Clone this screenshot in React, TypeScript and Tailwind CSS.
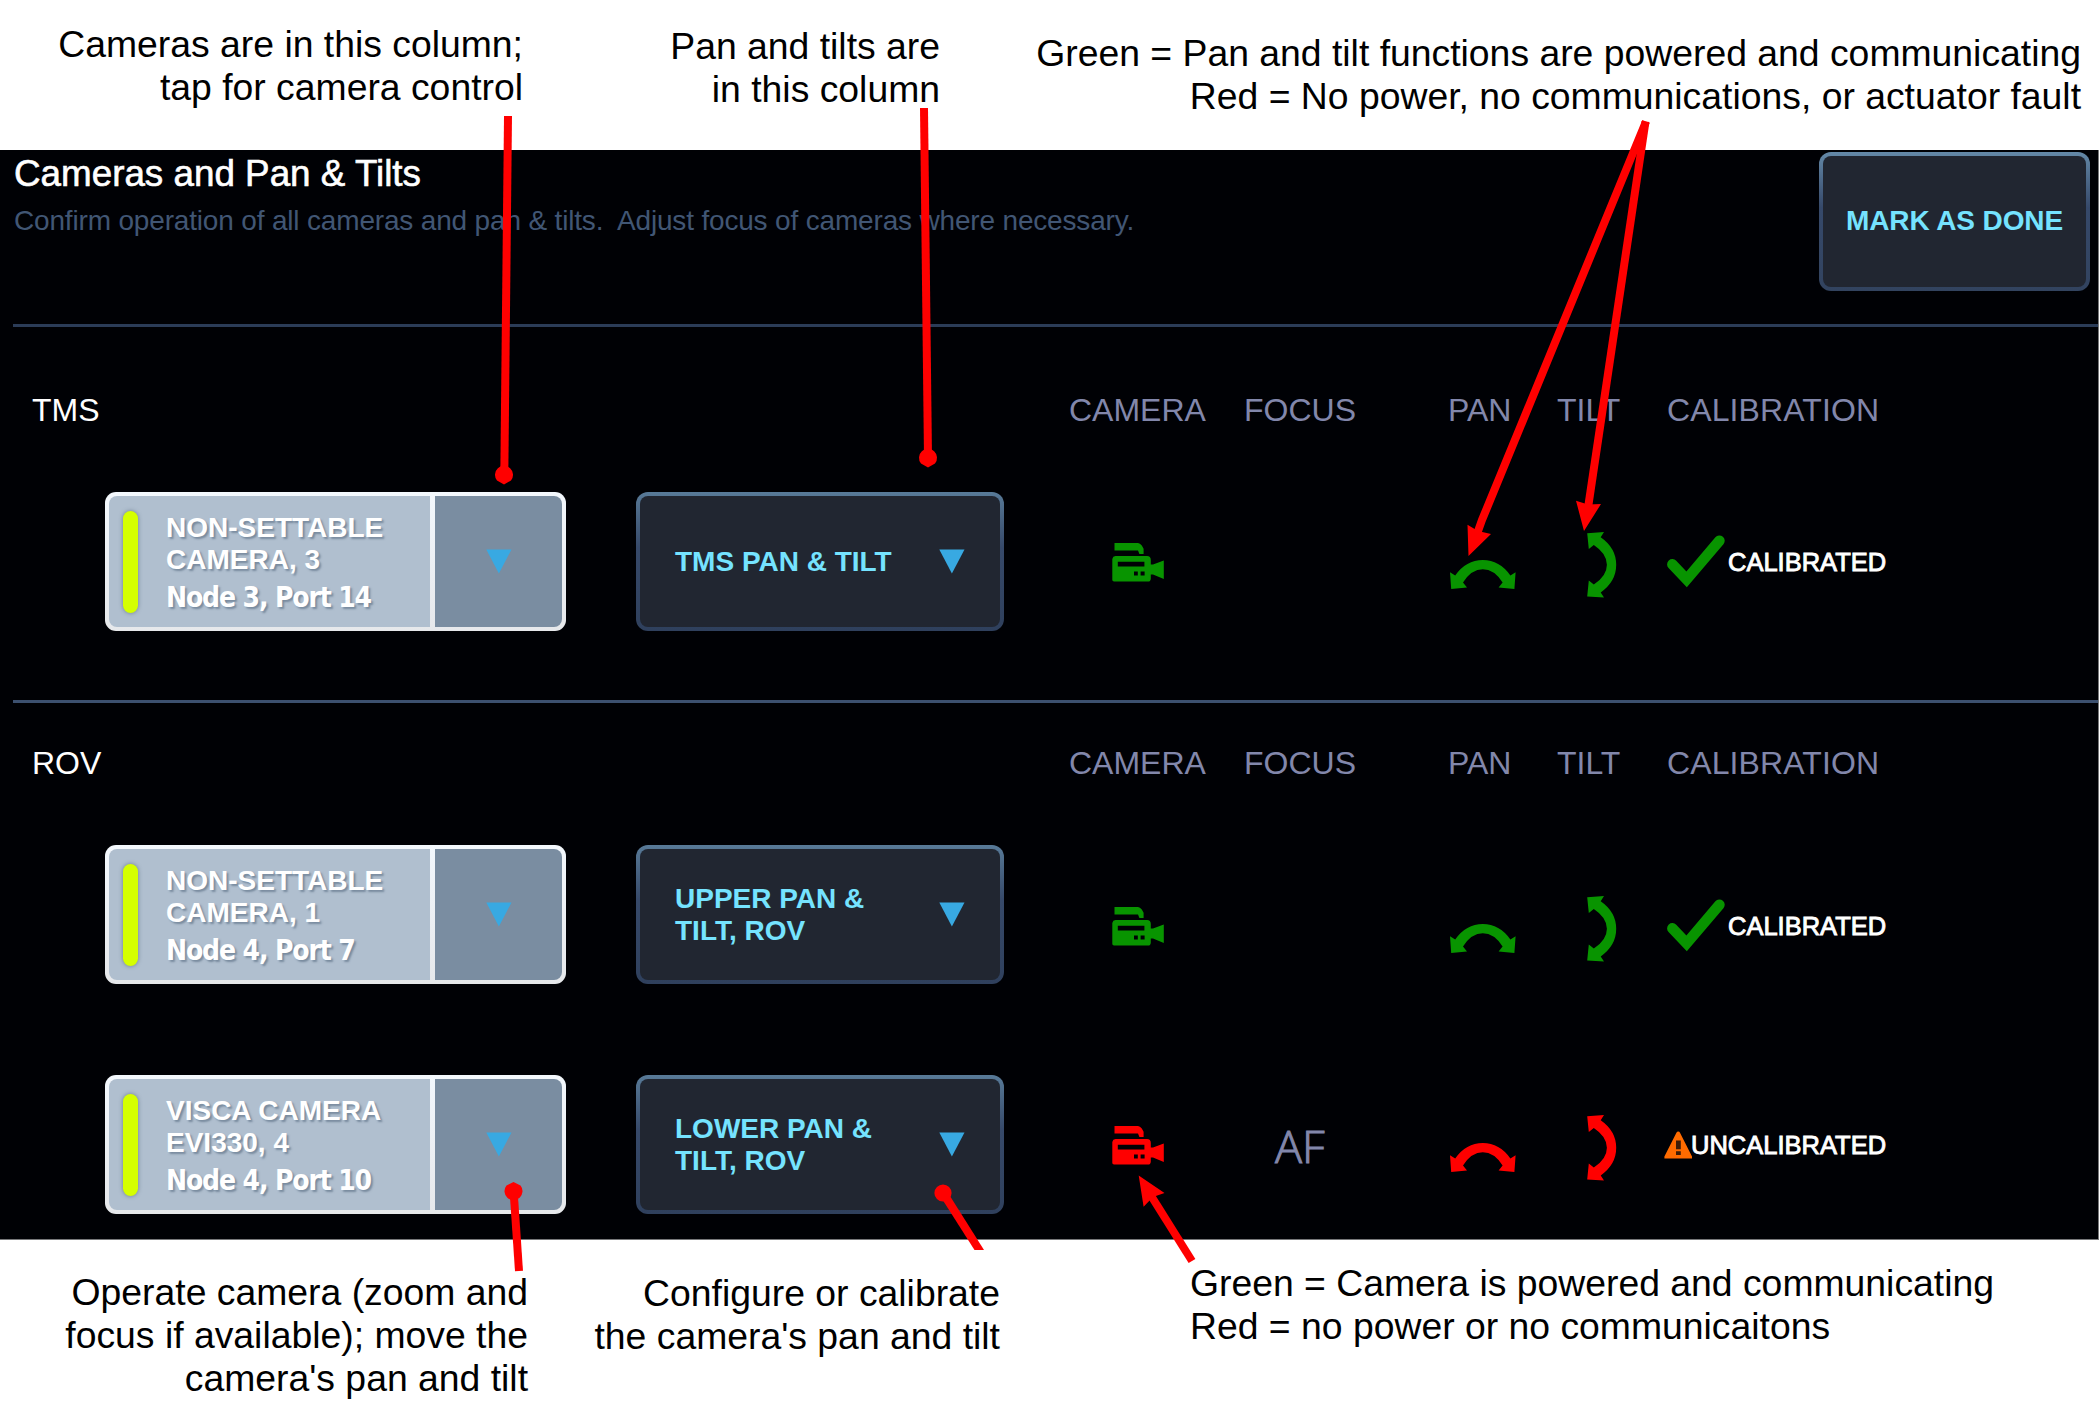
import React from "react";

type Status = "ok" | "fault";

interface Device {
  camera: string[];
  node: string;
  panTilt: string[];
  status: Status;
  focus?: string;
  calibrated: boolean;
  low?: boolean;
}

const GRID =
  "grid grid-cols-[105px_461px_70px_368px_65px_175px_204px_109px_110px_1fr]";

const tmsDevices: Device[] = [
  {
    camera: ["NON-SETTABLE", "CAMERA, 3"],
    node: "Node 3, Port 14",
    panTilt: ["TMS PAN & TILT"],
    status: "ok",
    calibrated: true,
  },
];

const rovDevices: Device[] = [
  {
    camera: ["NON-SETTABLE", "CAMERA, 1"],
    node: "Node 4, Port 7",
    panTilt: ["UPPER PAN &", "TILT, ROV"],
    status: "ok",
    calibrated: true,
    low: true,
  },
  {
    camera: ["VISCA CAMERA", "EVI330, 4"],
    node: "Node 4, Port 10",
    panTilt: ["LOWER PAN &", "TILT, ROV"],
    status: "fault",
    focus: "AF",
    calibrated: false,
  },
];

function Triangle() {
  return (
    <svg width="26" height="25" viewBox="0 0 26 25" className="block">
      <path d="M0.3 0.5H25.5L12.9 24.5Z" fill="#38a9e2" />
    </svg>
  );
}

function CameraIcon() {
  return (
    <svg width="53" height="40" viewBox="0 0 53 40" fill="currentColor" className="block">
      <path d="M2.5 0H26Q28 0 29.8 2.6L31.6 5.8V11H27.4L26 7.4H2.5Z" />
      <path
        fillRule="evenodd"
        d="M3.5 13H35Q38.8 13 38.8 17V21.5H41L51.8 17.5V36L41 31.5H38.8V35.5Q38.8 38.6 36 38.6H2Q0.3 38.4 0.3 37V16Q0.8 13.2 3.5 13ZM5.8 18.8V23.4H32.4V18.8ZM22 28.4V32.4H25.8V28.4ZM28.6 28.4V32.4H32.6V28.4Z"
      />
    </svg>
  );
}

const ARC =
  "M0 12.2L5.2 15.5Q16 0 32.8 0Q49.6 0 60.4 15.5L65.6 12.2L64.4 29L48.6 27.4L52.6 22.4Q44 9.3 32.8 9.3Q21.6 9.3 13 22.4L17 27.4L1.2 29Z";

function PanIcon() {
  return (
    <svg width="66" height="30" viewBox="0 0 66 30" fill="currentColor" className="block">
      <path d={ARC} />
    </svg>
  );
}

function TiltIcon() {
  return (
    <svg width="30" height="66" viewBox="0 0 30 66" fill="currentColor" className="block">
      <path d={ARC} transform="translate(29.2 0) rotate(90)" />
    </svg>
  );
}

function CheckIcon() {
  return (
    <svg width="60" height="54" viewBox="0 0 60 54" className="block shrink-0">
      <path d="M5.4 29.4L19.6 44.4L52.4 5.8" fill="none" stroke="#089400" strokeWidth="10.6" strokeLinecap="round" />
    </svg>
  );
}

function WarningIcon() {
  return (
    <svg width="29" height="28" viewBox="0 0 29 28" className="block shrink-0">
      <path d="M14.3 0.5Q15.5 0.5 16 1.8L28 25.5V27.6H0.4V25.5L12.4 1.8Q13 0.5 14.3 0.5Z" fill="#ff6b00" />
      <path d="M12 9.5H16.8V18.2H12ZM12 20.2H16.8V24H12Z" fill="#3d1d08" />
    </svg>
  );
}

function CameraButton({ lines, node }: { lines: string[]; node: string }) {
  return (
    <div className="flex h-[139px] rounded-[11px] bg-linear-to-b from-[#f3f8fd] to-[#e6e8eb] p-[4px]">
      <div className="flex flex-1 items-center rounded-l-[8px] bg-[#b0bfcf]">
        <div className="ml-[14px] h-[102px] w-[15px] rounded-full bg-[#d5ff00] shadow-[0_0_4px_rgba(60,80,100,0.6)]" />
        <div className="ml-[28px] pt-[1px] whitespace-nowrap text-[28px] leading-[32px] font-bold text-white [text-shadow:2px_2px_2px_rgba(90,110,132,0.65)]">
          {lines.map((line) => (
            <div key={line}>{line}</div>
          ))}
          <div className="mt-[6px] -mb-[1px] font-['DejaVu_Sans_Condensed','DejaVu_Sans',sans-serif] tracking-[-1.15px]">{node}</div>
        </div>
      </div>
      <div className="ml-[5px] flex w-[127px] items-center justify-center rounded-r-[8px] bg-[#7a8da1]">
        <Triangle />
      </div>
    </div>
  );
}

function PanTiltButton({ lines }: { lines: string[] }) {
  return (
    <div className="h-[139px] rounded-[12px] bg-linear-to-b from-[#587a98] via-[#36496a] via-40% to-[#2f405d] p-[4px]">
      <div className="flex h-full items-center justify-between rounded-[8px] bg-[#212631] pr-[35px] pl-[35px] text-[28px] leading-[32px] font-bold whitespace-nowrap text-[#75e3ff]">
        <div>
          {lines.map((line) => (
            <div key={line}>{line}</div>
          ))}
        </div>
        <Triangle />
      </div>
    </div>
  );
}

function SectionHeading({ title }: { title: string }) {
  return (
    <div className={`${GRID} text-[32px] leading-[36px] whitespace-nowrap text-[#8287ab]`}>
      <div className="col-span-5 pl-[32px] text-white">{title}</div>
      <div>CAMERA</div>
      <div>FOCUS</div>
      <div>PAN</div>
      <div>TILT</div>
      <div className="tracking-[0.1px]">CALIBRATION</div>
    </div>
  );
}

function DeviceRow({ device }: { device: Device }) {
  const tone = device.status === "ok" ? "text-[#089400]" : "text-[#ff0000]";
  const shift = device.low ? "pt-[11px]" : "";
  return (
    <div className={`${GRID} h-[139px] ${tone}`}>
      <div className="col-start-2">
        <CameraButton lines={device.camera} node={device.node} />
      </div>
      <div className="col-start-4">
        <PanTiltButton lines={device.panTilt} />
      </div>
      <div className={`col-start-6 ${shift}`}>
        <div className="mt-[51px] ml-[43px]">
          <CameraIcon />
        </div>
      </div>
      <div className={shift}>
        <div className="mt-[48px] ml-[31px] font-['Open_Sans',sans-serif] text-[45px] leading-[45px] font-light text-[#8287ab] [-webkit-text-stroke:1px_#8287ab]">
          {device.focus}
        </div>
      </div>
      <div className={shift}>
        <div className="mt-[68px] ml-[2px]">
          <PanIcon />
        </div>
      </div>
      <div className={shift}>
        <div className="mt-[40px] ml-[30px]">
          <TiltIcon />
        </div>
      </div>
      <div className={shift}>
        <div className="mt-[44px] flex h-[52px] items-center text-[25.5px] leading-[30px] whitespace-nowrap text-white [-webkit-text-stroke:0.9px_#fff]">
          {device.calibrated ? (
            <>
              <CheckIcon />
              <span className="ml-[1px]">CALIBRATED</span>
            </>
          ) : (
            <>
              <div className="-ml-[3px]">
                <WarningIcon />
              </div>
              <span className="-ml-[2px]">UNCALIBRATED</span>
            </>
          )}
        </div>
      </div>
    </div>
  );
}

function Callouts() {
  return (
    <svg
      width="2100"
      height="1422"
      viewBox="0 0 2100 1422"
      className="pointer-events-none absolute inset-0"
      fill="#ff0000"
      stroke="none"
    >
      <g stroke="#ff0000" strokeWidth="8" fill="none">
        <path d="M508 116L504.3 475" />
        <path d="M924 108L928 458" />
        <path d="M1646 121.5L1482 520L1477 534" />
        <path d="M1645.5 121.5L1588 508" />
        <path d="M1192 1261L1150 1194" />
        <path d="M513.6 1191L519 1271" />
      </g>
      <path d="M939.5 1195L946.5 1190.5L984 1250H974.5Z" />
      <path d="M504 484.5L497 480.5A9 9 0 1 1 511 480.5Z" />
      <path d="M928 467.5L921 463.5A9 9 0 1 1 935 463.5Z" />
      <path d="M513.5 1182L520.5 1185.5A9 9 0 1 1 506.5 1185.5Z" />
      <circle cx="943" cy="1193" r="8.6" />
      <path d="M1468.5 556L1467.5 524.7L1478 531L1491 534Z" />
      <path d="M1584 531L1576 500.7L1588 504.5L1601 504Z" />
      <path d="M1138.7 1175.5L1164.5 1193L1153 1197L1143.6 1206.7Z" />
    </svg>
  );
}

export default function App() {
  return (
    <div className="relative flex h-[1422px] w-[2100px] flex-col overflow-hidden bg-white font-['Liberation_Sans',Arial,sans-serif] text-black">
      <div className="flex h-[150px] items-start text-right text-[37.33px] leading-[43px] whitespace-nowrap">
        <div className="mt-[23px] w-[523px]">
          Cameras are in this column;
          <br />
          tap for camera control
        </div>
        <div className="mt-[25px] w-[417px]">
          Pan and tilts are
          <br />
          in this column
        </div>
        <div className="mt-[32px] w-[1141px]">
          Green = Pan and tilt functions are powered and communicating
          <br />
          Red = No power, no communications, or actuator fault
        </div>
      </div>

      <main className="h-[1090px] w-[2099px] border-r border-b border-[#77787a] bg-[#000105]">
        <header className="flex h-[174px] justify-between pt-[2px] pr-[8px] pl-[14px]">
          <div>
            <h1 className="text-[36.8px] leading-[43px] text-white [-webkit-text-stroke:0.6px_#fff]">
              Cameras and Pan &amp; Tilts
            </h1>
            <p className="mt-[10px] text-[28px] leading-[32px] tracking-[-0.17px] whitespace-pre text-[#415674]">
              {"Confirm operation of all cameras and pan & tilts.  Adjust focus of cameras where necessary."}
            </p>
          </div>
          <div className="h-[139px] w-[271px] rounded-[12px] bg-linear-to-b from-[#6489a8] via-[#36496a] via-40% to-[#32435f] p-[4px]">
            <div className="flex h-full items-center justify-center rounded-[8px] bg-[#212631] pb-[2px] text-[28px] leading-[32px] font-bold tracking-[-0.1px] text-[#75e3ff]">
              MARK AS DONE
            </div>
          </div>
        </header>

        <div className="ml-[13px] h-[3px] bg-[#2b3c58]" />

        <section className="h-[373px] pt-[65px]">
          <SectionHeading title="TMS" />
          <div className="mt-[64px]">
            {tmsDevices.map((device) => (
              <DeviceRow key={device.node} device={device} />
            ))}
          </div>
        </section>

        <div className="ml-[13px] h-[3px] bg-[#3c506f]" />

        <section className="pt-[42px]">
          <SectionHeading title="ROV" />
          <div className="mt-[64px] flex flex-col gap-[91px]">
            {rovDevices.map((device) => (
              <DeviceRow key={device.node} device={device} />
            ))}
          </div>
        </section>
      </main>

      <div className="flex items-start text-[37.33px] leading-[43px] whitespace-nowrap">
        <div className="mt-[31px] w-[528px] text-right">
          Operate camera (zoom and
          <br />
          focus if available); move the
          <br />
          camera's pan and tilt
        </div>
        <div className="mt-[32px] w-[472px] text-right">
          Configure or calibrate
          <br />
          the camera's pan and tilt
        </div>
        <div className="mt-[22px] ml-[190px]">
          Green = Camera is powered and communicating
          <br />
          Red = no power or no communicaitons
        </div>
      </div>

      <Callouts />
    </div>
  );
}
